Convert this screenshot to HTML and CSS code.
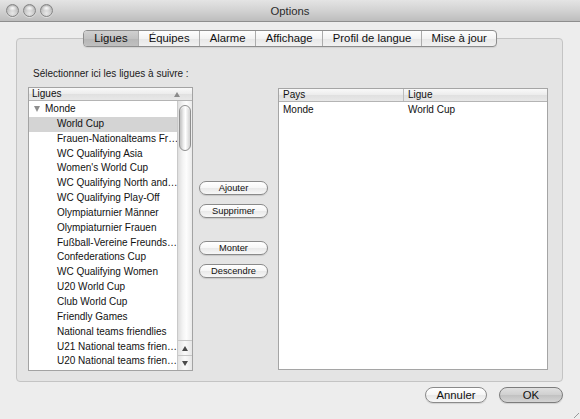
FILE: index.html
```html
<!DOCTYPE html>
<html lang="fr">
<head>
<meta charset="utf-8">
<title>Options</title>
<link rel="stylesheet" href="styles.css">
</head>
<body>
<div class="window">
  <div class="titlebar">
    <div class="lights"><span class="light"></span><span class="light"></span><span class="light"></span></div>
    <div class="title">Options</div>
    <div></div>
  </div>

  <div class="tabs">
    <div class="tab sel">Ligues</div>
    <div class="tab">Équipes</div>
    <div class="tab">Alarme</div>
    <div class="tab">Affichage</div>
    <div class="tab">Profil de langue</div>
    <div class="tab">Mise à jour</div>
  </div>

  <div class="tabbox">
    <div class="label">Sélectionner ici les ligues à suivre :</div>
    <div class="panes">
      <div class="list">
        <div class="list-head"><span>Ligues</span><span class="sort"></span></div>
        <div class="list-body">
          <div class="rows">
            <div class="row group"><span class="disc"></span>Monde</div>
            <div class="row child sel">World Cup</div>
            <div class="row child">Frauen-Nationalteams Fr…</div>
            <div class="row child">WC Qualifying Asia</div>
            <div class="row child">Women's World Cup</div>
            <div class="row child">WC Qualifying North and…</div>
            <div class="row child">WC Qualifying Play-Off</div>
            <div class="row child">Olympiaturnier Männer</div>
            <div class="row child">Olympiaturnier Frauen</div>
            <div class="row child">Fußball-Vereine Freunds…</div>
            <div class="row child">Confederations Cup</div>
            <div class="row child">WC Qualifying Women</div>
            <div class="row child">U20 World Cup</div>
            <div class="row child">Club World Cup</div>
            <div class="row child">Friendly Games</div>
            <div class="row child">National teams friendlies</div>
            <div class="row child">U21 National teams frien…</div>
            <div class="row child">U20 National teams frien…</div>
          </div>
          <div class="scrollbar">
            <div class="track">
              <div class="thumb"></div>
            </div>
            <div class="arrow up"><span class="tri-up"></span></div>
            <div class="arrow down"><span class="tri-down"></span></div>
          </div>
        </div>
      </div>

      <div class="btncol">
        <button class="btn small">Ajouter</button>
        <button class="btn small">Supprimer</button>
        <button class="btn small gap">Monter</button>
        <button class="btn small">Descendre</button>
      </div>

      <div class="table">
        <div class="thead">
          <div class="th c1">Pays</div>
          <div class="th c2">Ligue</div>
        </div>
        <div class="trow">
          <div class="td c1">Monde</div>
          <div class="td c2">World Cup</div>
        </div>
      </div>
    </div>
  </div>

  <div class="footer">
    <button class="btn big">Annuler</button>
    <button class="btn big default">OK</button>
  </div>

  <div class="grip"></div>
</div>
</body>
</html>
```

FILE: styles.css
```css
* { box-sizing: border-box; margin: 0; padding: 0; }
html, body { width: 580px; height: 419px; overflow: hidden; }
body {
  font-family: "Liberation Sans", Arial, sans-serif;
  color: #111;
  background: #ededed;
}
.window {
  width: 580px;
  height: 419px;
  display: flex;
  flex-direction: column;
  position: relative;
  background: #ededed;
}

/* title bar */
.titlebar {
  height: 22px;
  flex: none;
  display: grid;
  grid-template-columns: 1fr auto 1fr;
  align-items: center;
  background: linear-gradient(#e4e4e4, #d2d2d2 50%, #bdbdbd);
  border-bottom: 1px solid #8e8e8e;
}
.lights { display: flex; gap: 4px; padding-left: 6px; padding-top: 0; }
.light {
  width: 13px; height: 13px; border-radius: 50%;
  border: 1px solid #858585;
  background:
    radial-gradient(ellipse 60% 40% at 50% 28%, rgba(255,255,255,.95), rgba(255,255,255,0) 70%),
    radial-gradient(circle at 50% 75%, #e8e8e8 0, #c4c4c4 55%, #9c9c9c 100%);
  box-shadow: 0 1px 0 rgba(255,255,255,.45);
}
.title { font-size: 11.3px; color: #2b2b2b; padding-top: 1px; }

/* tabs */
.tabs {
  align-self: center;
  margin-top: 8px;
  height: 17px;
  display: flex;
  border: 1px solid #8d8d8d;
  border-radius: 4px;
  overflow: hidden;
  background: linear-gradient(#fefefe, #f3f3f3 50%, #e7e7e7 51%, #f1f1f1);
  position: relative;
  z-index: 1;
  box-shadow: 0 1px 1px rgba(0,0,0,.08);
}
.tab {
  font-size: 11.3px;
  line-height: 15px;
  padding: 0 9.6px;
  border-left: 1px solid #acacac;
  text-align: center;
  color: #111;
}
.tab:first-child { border-left: 0; padding: 0 10.6px; }
.tab.sel { background: linear-gradient(#d0d0d0, #c2c2c2 50%, #b6b6b6 51%, #c0c0c0); }

/* tab box */
.tabbox {
  margin: -9px 17px 0 16px;
  height: 344px;
  flex: none;
  border: 1px solid #c4c4c4;
  border-radius: 4px;
  background: #e4e4e4;
  padding: 28px 14px 0 11px;
  display: flex;
  flex-direction: column;
}
.label { font-size: 10px; line-height: 13px; padding-left: 5px; color: #1a1a1a; }
.panes { display: flex; margin-top: 7px; align-items: flex-start; }

/* league list */
.list {
  width: 165px;
  height: 284px;
  border: 1px solid #a3a3a3;
  background: #fff;
  display: flex;
  flex-direction: column;
}
.list-head, .thead {
  height: 13px;
  flex: none;
  background: linear-gradient(#f9f9f9, #ececec 50%, #e0e0e0 51%, #e8e8e8);
  border-bottom: 1px solid #b4b4b4;
  font-size: 10px;
  line-height: 12px;
}
.list-head { display: flex; justify-content: space-between; align-items: center; padding: 0 12px 0 3px; }
.sort {
  width: 0; height: 0;
  border-left: 3px solid transparent;
  border-right: 3px solid transparent;
  border-bottom: 5px solid #8a8a8a;
}
.list-body { flex: 1; display: grid; grid-template-columns: 1fr 15px; min-height: 0; }
.rows { overflow: hidden; padding-top: 1px; }
.row {
  height: 14.85px;
  line-height: 14.85px;
  font-size: 10px;
  white-space: nowrap;
  overflow: hidden;
  color: #111;
}
.row.group { padding-left: 5px; display: flex; align-items: center; }
.row.child { padding-left: 28px; }
.row.sel { background: #d4d4d4; }
.disc {
  width: 0; height: 0;
  margin-right: 5px;
  border-left: 3.5px solid transparent;
  border-right: 3.5px solid transparent;
  border-top: 6px solid #8e8e8e;
}

/* scrollbar */
.scrollbar {
  display: flex;
  flex-direction: column;
  border-left: 1px solid #c9c9c9;
  background: linear-gradient(90deg, #dedede, #f4f4f4 35%, #fdfdfd 60%, #ebebeb);
}
.track { flex: 1; padding: 4px 1px 0 1px; }
.thumb {
  height: 46px;
  border-radius: 7px;
  border: 1px solid #8f8f8f;
  background: linear-gradient(90deg, #bdbdbd, #eeeeee 35%, #ffffff 55%, #cfcfcf);
  box-shadow: inset 0 1px 1px rgba(255,255,255,.8);
}
.arrow {
  height: 15px;
  display: flex;
  align-items: center;
  justify-content: center;
  border-top: 1px solid #c6c6c6;
  background: linear-gradient(90deg, #e3e3e3, #fafafa 50%, #e6e6e6);
}
.tri-up, .tri-down { width: 0; height: 0; border-left: 3px solid transparent; border-right: 3px solid transparent; }
.tri-up { border-bottom: 5px solid #4a4a4a; }
.tri-down { border-top: 5px solid #4a4a4a; }

/* buttons */
.btn {
  font-family: "Liberation Sans", Arial, sans-serif;
  color: #111;
  border: 1px solid #8a8a8a;
  background: linear-gradient(#ffffff, #f6f6f6 50%, #e9e9e9 51%, #f7f7f7);
  box-shadow: 0 1px 1px rgba(0,0,0,.12);
  text-align: center;
}
.btncol { width: 69px; margin-left: 6px; padding-top: 94px; display: flex; flex-direction: column; gap: 8.8px; }
.btn.small { height: 14px; border-radius: 7px; font-size: 9.3px; line-height: 12px; }
.btn.small.gap { margin-top: 14.4px; }

/* right table */
.table {
  width: 270px;
  height: 282px;
  margin-left: 10px;
  margin-top: 1px;
  border: 1px solid #a5a5a5;
  background: #fff;
}
.thead { display: flex; }
.th { padding-left: 4px; }
.th.c1 { width: 125px; border-right: 1px solid #bdbdbd; }
.trow { display: flex; height: 15px; line-height: 15px; font-size: 10px; }
.td { padding-left: 4px; }
.td.c1 { width: 125px; }
.td.c2 { padding-left: 4px; }

/* footer */
.footer { display: flex; justify-content: flex-end; gap: 12px; padding: 5px 17px 0 0; }
.btn.big { height: 16px; border-radius: 8px; font-size: 11.3px; line-height: 14px; }
.footer .btn:first-child { width: 62px; }
.btn.default {
  width: 64px;
  border-color: #7c7c7c;
  background: linear-gradient(#e0e0e0, #cfcfcf 50%, #c1c1c1 51%, #d4d4d4);
}

/* resize grip */
.grip {
  position: absolute;
  right: 1px;
  bottom: 1px;
  width: 10px;
  height: 10px;
  background: repeating-linear-gradient(135deg, transparent 0 2px, #9a9a9a 2px 3px, transparent 3px 4px);
  clip-path: polygon(100% 0, 100% 100%, 0 100%);
}
```
